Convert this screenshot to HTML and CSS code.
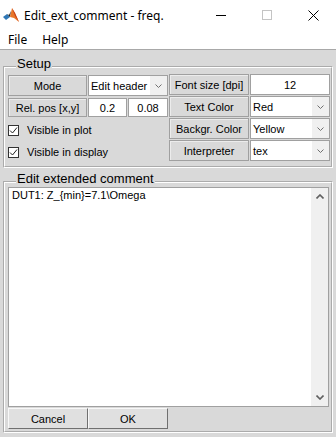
FILE: index.html
```html
<!DOCTYPE html>
<html>
<head>
    <meta name="viewport" content="width=device-width, initial-scale=1">
    <link rel="stylesheet" href="styles.css">
</head>

<body>
    <div class="window">
        <div class="titlebar">
            <svg class="app-icon" width="16" height="16" viewBox="0 0 16 16">
                <polygon points="0,10 4,7 7,10 3,13" fill="#2f78b7"/>
                <polygon points="4,7 6,8 8,4 7,10" fill="#222"/>
                <polygon points="7,10 9,1 12,6 16,15 11,11" fill="#e9772a"/>
                <polygon points="9,1 12,6 16,15 12,9" fill="#c43e17"/>
            </svg>
            <span class="title">Edit_ext_comment - freq.</span>
            <div class="win-controls">
                <div class="win-btn">
                    <svg width="10" height="10" viewBox="0 0 10 10"><line x1="0" y1="5.5" x2="10" y2="5.5" stroke="#000"/></svg>
                </div>
                <div class="win-btn">
                    <svg width="10" height="10" viewBox="0 0 10 10"><rect x="0.5" y="0.5" width="9" height="9" fill="none" stroke="#c4c4c4"/></svg>
                </div>
                <div class="win-btn">
                    <svg width="11" height="11" viewBox="0 0 11 11"><path d="M0.5 0.5 L10.5 10.5 M10.5 0.5 L0.5 10.5" stroke="#000" stroke-width="1"/></svg>
                </div>
            </div>
        </div>

        <div class="menubar">
            <span class="menu-item">File</span>
            <span class="menu-item">Help</span>
        </div>

        <div class="figure">
            <fieldset class="panel setup">
                <legend>Setup</legend>
                <div class="setup-body">
                    <div class="col-left">
                        <div class="grid-left">
                            <div class="cell label">Mode</div>
                            <div class="cell select">Edit header<span class="arrow"><svg width="7" height="4" viewBox="0 0 7 4"><polyline points="0.5,0.5 3.5,3.5 6.5,0.5" fill="none" stroke="#707070"/></svg></span></div>
                            <div class="cell label">Rel. pos [x,y]</div>
                            <div class="pair">
                                <div class="cell edit">0.2</div>
                                <div class="cell edit">0.08</div>
                            </div>
                        </div>
                        <div class="checks">
                            <div class="check">
                                <span class="box"><svg width="9" height="9" viewBox="0 0 9 9"><polyline points="1,4.5 3.5,7 8,1.5" fill="none" stroke="#222" stroke-width="1"/></svg></span>
                                Visible in plot
                            </div>
                            <div class="check">
                                <span class="box"><svg width="9" height="9" viewBox="0 0 9 9"><polyline points="1,4.5 3.5,7 8,1.5" fill="none" stroke="#222" stroke-width="1"/></svg></span>
                                Visible in display
                            </div>
                        </div>
                    </div>

                    <div class="grid-right">
                        <div class="cell label">Font size [dpi]</div>
                        <div class="cell edit">12</div>
                        <div class="cell label">Text Color</div>
                        <div class="cell select">Red<span class="arrow"><svg width="7" height="4" viewBox="0 0 7 4"><polyline points="0.5,0.5 3.5,3.5 6.5,0.5" fill="none" stroke="#707070"/></svg></span></div>
                        <div class="cell label">Backgr. Color</div>
                        <div class="cell select">Yellow<span class="arrow"><svg width="7" height="4" viewBox="0 0 7 4"><polyline points="0.5,0.5 3.5,3.5 6.5,0.5" fill="none" stroke="#707070"/></svg></span></div>
                        <div class="cell label">Interpreter</div>
                        <div class="cell select">tex<span class="arrow"><svg width="7" height="4" viewBox="0 0 7 4"><polyline points="0.5,0.5 3.5,3.5 6.5,0.5" fill="none" stroke="#707070"/></svg></span></div>
                    </div>
                </div>
            </fieldset>

            <fieldset class="panel comment">
                <legend>Edit extended comment</legend>
                <div class="comment-body">
                    <div class="comment-box">
                        <div class="comment-text">DUT1: Z_{min}=7.1\Omega</div>
                        <div class="scrollbar">
                            <span class="sb-btn"><svg width="8" height="5" viewBox="0 0 8 5"><polyline points="0.5,4.5 4,1 7.5,4.5" fill="none" stroke="#606060" stroke-width="1.6"/></svg></span>
                            <span class="sb-btn"><svg width="8" height="5" viewBox="0 0 8 5"><polyline points="0.5,0.5 4,4 7.5,0.5" fill="none" stroke="#606060" stroke-width="1.6"/></svg></span>
                        </div>
                    </div>
                    <div class="buttons">
                        <button type="button" class="btn">Cancel</button>
                        <button type="button" class="btn">OK</button>
                    </div>
                </div>
            </fieldset>
        </div>
    </div>
</body>
</html>
```

FILE: styles.css
```css
body {
    margin: 0;
    font-family: "Liberation Sans", Arial, sans-serif;
    color: #000;
}

.window {
    width: 336px;
    height: 437px;
    display: flex;
    flex-direction: column;
    background: #fff;
    overflow: hidden;
}

/* title bar */
.titlebar {
    height: 30px;
    flex: none;
    display: flex;
    align-items: center;
    font-family: "Noto Sans", "Open Sans", sans-serif;
    font-size: 12px;
}

.app-icon {
    margin-left: 3px;
}

.title {
    margin-left: 5px;
}

.win-controls {
    margin-left: auto;
    display: flex;
}

.win-btn {
    width: 46px;
    height: 30px;
    display: flex;
    align-items: center;
    justify-content: center;
}

/* menu */
.menubar {
    height: 19px;
    flex: none;
    display: flex;
    align-items: center;
    padding-left: 1px;
    border-bottom: 1px solid #a8a8a8;
    font-family: "Noto Sans", "Open Sans", sans-serif;
    font-size: 12px;
}

.menu-item {
    padding: 0 8px 0 7px;
}

/* figure area */
.figure {
    flex: 1;
    background: #d9d9d9;
    padding: 7px 3px 0;
}

.panel {
    margin: 0;
    min-width: 0;
    border: 2px groove #fff;
    padding: 0 1px 3px 3px;
}

.panel legend {
    font-size: 13px;
    line-height: 14px;
    padding: 0 1px 6px;
    margin-left: 8px;
}

.setup-body {
    margin-top: -5px;
    display: flex;
}

.col-left {
    width: 160px;
    padding-top: 3px;
}

.grid-left {
    display: grid;
    grid-template-columns: 79px 80px;
    grid-template-rows: 21px 19px;
    column-gap: 1px;
    row-gap: 2px;
}

.pair {
    display: grid;
    grid-template-columns: 39px 40px;
    column-gap: 1px;
}

.grid-right {
    margin-left: 1px;
    margin-top: 2px;
    display: grid;
    grid-template-columns: 80px 80px;
    grid-auto-rows: 21px;
    gap: 1px;
}

.cell {
    box-sizing: border-box;
    display: flex;
    align-items: center;
    font-size: 11px;
    white-space: nowrap;
}

.label {
    justify-content: center;
    background: #d9d9d9;
    border: 1px solid #a0a0a0;
    box-shadow: inset 1px 1px 0 #ececec;
}

.edit {
    justify-content: center;
    background: #fff;
    border: 1px solid #a0a0a0;
}

.select {
    background: #fff;
    border: 1px solid #a0a0a0;
    padding-left: 2px;
}

.select .arrow {
    margin-left: auto;
    align-self: stretch;
    width: 17px;
    background: #f0f0f0;
    display: flex;
    align-items: center;
    justify-content: center;
}

.checks {
    margin-top: 2px;
}

.check {
    height: 22px;
    display: flex;
    align-items: center;
    font-size: 11px;
}

.box {
    width: 11px;
    height: 11px;
    box-sizing: border-box;
    margin-right: 8px;
    border: 1px solid #333;
    background: #fff;
    display: flex;
    align-items: center;
    justify-content: center;
}

/* comment panel */
.comment {
    margin-top: 4px;
    padding-bottom: 2px;
}

.comment-body {
    margin-top: -5px;
}

.comment-box {
    width: 321px;
    height: 220px;
    box-sizing: border-box;
    display: flex;
    background: #fff;
    border: 1px solid #a0a0a0;
}

.comment-text {
    flex: 1;
    padding: 1px 3px;
    font-size: 11px;
    line-height: 13px;
}

.scrollbar {
    width: 17px;
    background: #f0f0f0;
    display: flex;
    flex-direction: column;
    justify-content: space-between;
}

.sb-btn {
    height: 17px;
    display: flex;
    align-items: center;
    justify-content: center;
}

.buttons {
    margin-top: 1px;
    display: flex;
}

.btn {
    width: 80px;
    height: 21px;
    margin: 0;
    padding: 0;
    font-family: "Liberation Sans", Arial, sans-serif;
    font-size: 11px;
    color: #000;
    background: #e0e0e0;
    border: 1px solid;
    border-color: #f8f8f8 #707070 #707070 #f8f8f8;
}
```
